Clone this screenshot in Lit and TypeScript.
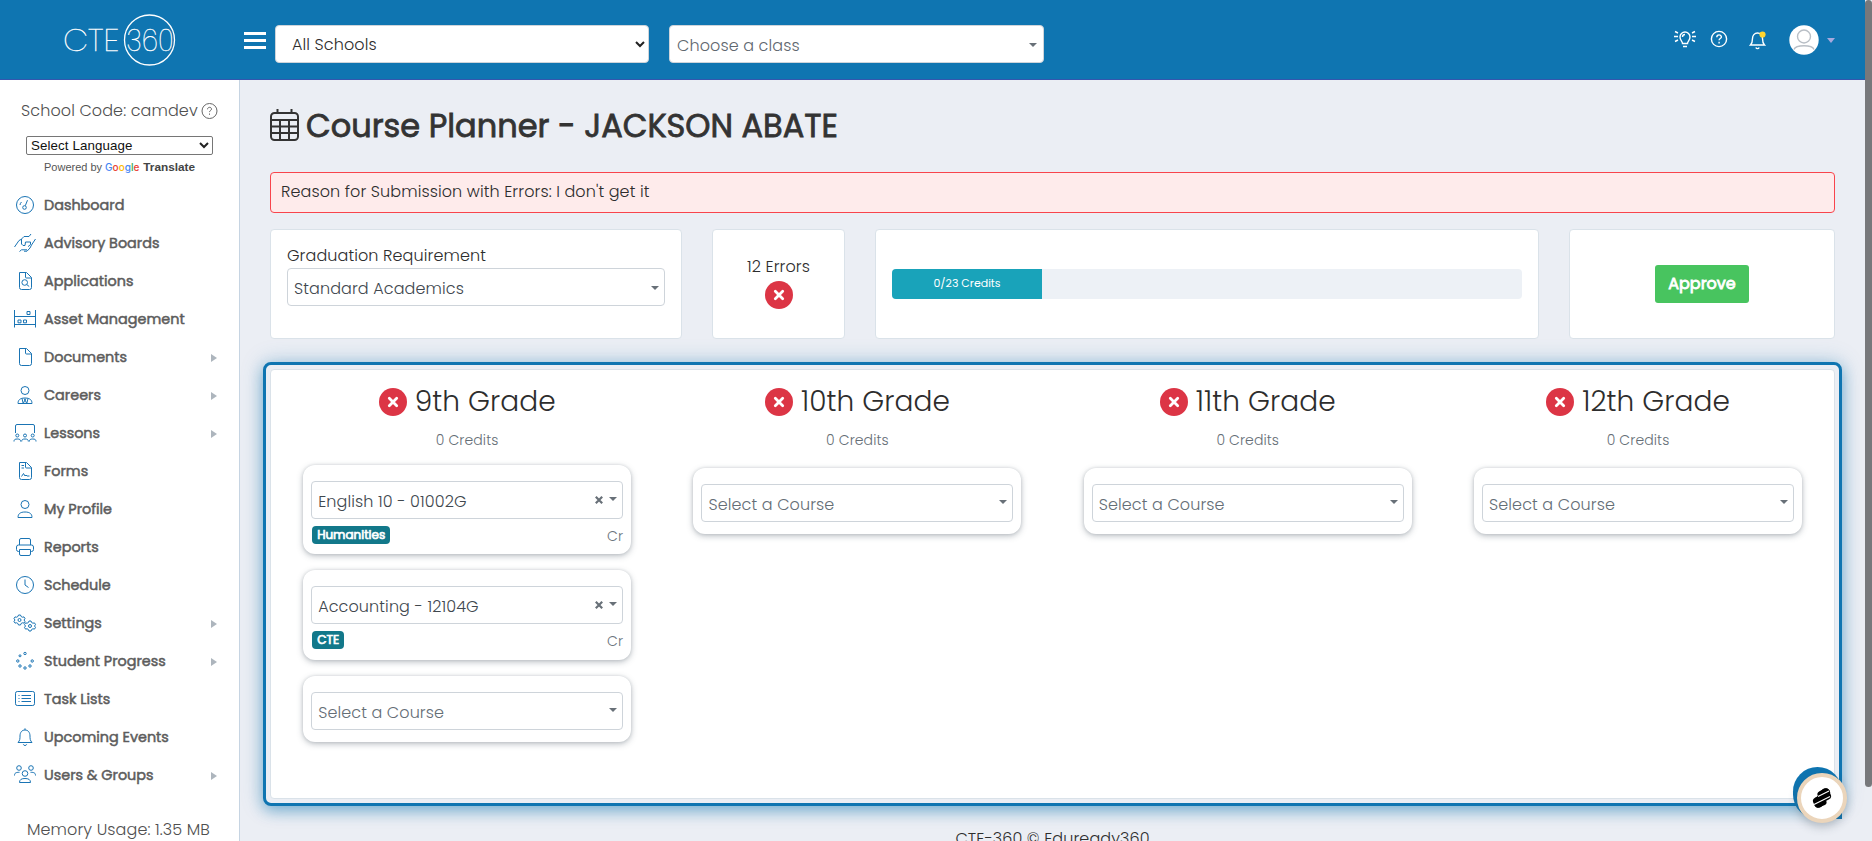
import { LitElement, html, css, svg, nothing } from "lit";
import { customElement } from "lit/decorators.js";

const page = svg`<path d="M6.500 3.500h7l5 5v10a2 2 0 0 1-2 2h-8a2 2 0 0 1-2-2zM12.500 3.500v4.500a1 1 0 0 0 1 1h5"/>`;
const gear = (x: number, y: number) => svg`<g transform="translate(${x} ${y})"><circle r="1.500"/><path d="M-1-5h2l.6 1.500 1.300.7 1.600-.3 1 1.700-1 1.400 1 1.400-1 1.700-1.600-.3-1.300.7L1 5h-2l-.6-1.500-1.300-.7-1.600.3-1-1.700 1-1.400-1-1.400 1-1.700 1.600.3 1.300-.7z"/></g>`;

const icons: Record<string, unknown> = {
  dash: svg`<circle cx="12" cy="12" r="8.500"/><circle cx="11.500" cy="14.500" r="1.800"/><path d="M12.300 12.700l2.200-5.500M7 12a5 5 0 0 1 1.500-3"/>`,
  hands: svg`<path d="M1.500 16l4.500-6.500 2-1M8.500 13V8L11 5.500h5l2-2.500M22.500 8l-4 6-1.500 3-3 3.200h-3M6.500 20.500l2-1.700h5.500M8.500 13l1.500 1.500h2l.5-3.500h5v2.500M17.500 13.500l-2.500 2.200"/>`,
  app: svg`${page}<circle cx="11.700" cy="13.500" r="2.800"/><path d="M13.700 15.500l2.500 2"/>`,
  asset: svg`<path d="M1.500 3v17.500M22.500 3v17.500M1.500 9.500h21M1.500 17.500h21M14 4.500h3v3h-3zM5 13h3v2.800H5zM10.500 13h3v2.800h-3z"/>`,
  doc: page,
  career: svg`<circle cx="12" cy="7.500" r="4"/><path d="M5 20.500c0-3.500 2-5.500 7-5.500s7 2 7 5.500zM9 15.500l1.200 5 1.800-3.500 1.800 3.500 1.200-5M11 15.500l1 1.500 1-1.500"/>`,
  lesson: svg`<path d="M2.500 12V5a1.500 1.500 0 0 1 1.500-1.500h16A1.500 1.500 0 0 1 21.500 5v7M1 20.500c0-2 1-2.500 3.300-2.500s3.300.5 3.300 2.500M8.700 20.500c0-2 1-2.500 3.300-2.500s3.300.5 3.300 2.500M16.400 20.500c0-2 1-2.500 3.300-2.500s3.300.5 3.300 2.500"/><circle cx="4.300" cy="14.500" r="1.500"/><circle cx="12" cy="14.500" r="1.500"/><circle cx="19.700" cy="14.500" r="1.500"/>`,
  form: svg`${page}<path d="M8.500 6.500h2.500M8.500 9h2.500M8.500 17.500l2-3 1.500 2.500 1-1 1 1h2.500"/>`,
  user: svg`<circle cx="12" cy="7.500" r="4"/><path d="M5 20.500c0-3.500 2-5.500 7-5.500s7 2 7 5.500z"/>`,
  print: svg`<path d="M6.500 10V5a1.500 1.500 0 0 1 1.500-1.500h8A1.500 1.500 0 0 1 17.500 5v5M6.500 16.500h-1a2 2 0 0 1-2-2V12a2 2 0 0 1 2-2h13a2 2 0 0 1 2 2v2.500a2 2 0 0 1-2 2h-1M6.500 14.500h11v4.500a1.500 1.500 0 0 1-1.500 1.500H8A1.500 1.500 0 0 1 6.500 19z"/>`,
  clock: svg`<circle cx="12" cy="12" r="8.500"/><path d="M12 6.500V12l3.500 2.500"/>`,
  gears: svg`${gear(6.5, 9)}${gear(17, 15)}`,
  spin: svg`<circle cx="12" cy="4.500" r="1.200"/><circle cx="12" cy="19" r="1.200"/><circle cx="4.800" cy="12" r="1.200"/><circle cx="19.200" cy="12" r="1.200"/><circle cx="7" cy="6.800" r="1"/><circle cx="7" cy="17" r="1.200"/><circle cx="17" cy="17" r="1.200"/>`,
  list: svg`<rect x="2.500" y="4.500" width="19" height="14" rx="1.800"/><path d="M8.500 8.500h9.500M8.500 11.500h9.500M8.500 14.500h9.500M5.500 8.500h1M5.500 11.500h1M5.500 14.500h1"/>`,
  bell: svg`<path d="M5 17.500c2-2 2-4 2-6.500 0-3.500 1.800-6 5-6s5 2.500 5 6c0 2.500 0 4.500 2 6.500zM12 3.300V5M10.300 19.300a1.800 1.800 0 0 0 3.400 0"/>`,
  group: svg`<circle cx="6" cy="5" r="2.300"/><circle cx="18" cy="5" r="2.300"/><circle cx="12" cy="10.500" r="2.800"/><path d="M6.500 19.500c0-3 2-4 5.500-4s5.500 1 5.500 4zM1.500 12.500c0-2.500 1.300-3.200 5-3.200M22.500 12.500c0-2.500-1.300-3.200-5-3.200"/>`,
};

const nav: [string, string, boolean][] = [
  ["dash", "Dashboard", false],
  ["hands", "Advisory Boards", false],
  ["app", "Applications", false],
  ["asset", "Asset Management", false],
  ["doc", "Documents", true],
  ["career", "Careers", true],
  ["lesson", "Lessons", true],
  ["form", "Forms", false],
  ["user", "My Profile", false],
  ["print", "Reports", false],
  ["clock", "Schedule", false],
  ["gears", "Settings", true],
  ["spin", "Student Progress", true],
  ["list", "Task Lists", false],
  ["bell", "Upcoming Events", false],
  ["group", "Users & Groups", true],
];

interface Course { name: string; tag: string }
interface Grade { name: string; courses: Course[] }
const grades: Grade[] = [
  { name: "9th Grade", courses: [
    { name: "English 10 - 01002G", tag: "Humanities" },
    { name: "Accounting - 12104G", tag: "CTE" },
  ] },
  { name: "10th Grade", courses: [] },
  { name: "11th Grade", courses: [] },
  { name: "12th Grade", courses: [] },
];

const credits = { barWidth: 150, label: "0/23 Credits" };

const errorDot = html`<svg class="dot" viewBox="0 0 28 28" width="28" height="28">
  <circle cx="14" cy="14" r="14" fill="#dc3545"/>
  <path d="M10.300 10.300l7.400 7.400M17.700 10.300l-7.400 7.400" stroke="#fff" stroke-width="2.800" stroke-linecap="round"/>
</svg>`;

const caret = html`<svg class="caret" width="8" height="4" viewBox="0 0 8 4"><path d="M0 0h8L4 4z" fill="#687078"/></svg>`;

const chevron = html`<svg width="10" height="7" viewBox="0 0 10 7"><path d="M1 1l4 4 4-4" fill="none" stroke="#222" stroke-width="2"/></svg>`;

@customElement("app-root")
class AppRoot extends LitElement {
  static styles = css`
    :host {
      display: block; position: relative; width: 1872px; height: 841px; overflow: hidden;
      background: #ebeef4; color: #2d2d2d;
      font-family: Poppins, Inter, "Open Sans", sans-serif;
      font-size: 16px; font-weight: 300; line-height: 24px; letter-spacing: .1px; white-space: nowrap;
    }
    * { box-sizing: border-box; }
    svg { display: block; flex: none; }
    .header { display: flex; height: 80px; width: 1865px; background: #0f75b1; border-bottom: 1px solid #3456ae; align-items: flex-start; }
    .brand { width: 244px; padding: 14px 0 0 62px; }
    .logo text { font-weight: 200; font-size: 30px; fill: #fff; stroke: #fff; stroke-width: .35px; letter-spacing: 0; }
    .burger { width: 22px; height: 17px; margin-top: 32px; display: flex; flex-direction: column; justify-content: space-between; }
    .burger i { height: 3px; background: #fff; }
    .select { display: flex; align-items: center; justify-content: space-between; border: 1px solid #ced4da; border-radius: 4px; background: #fff; height: 38px; }
    .schools { width: 374px; margin: 25px 0 0 9px; padding: 1px 3px 0 16px; }
    .class { width: 375px; margin: 25px 0 0 20px; padding: 3px 6px 0 7px; color: #5f676f; }
    .tools { display: flex; align-items: center; margin-left: auto; height: 80px; }
    .tools svg { fill: none; stroke: #fff; stroke-width: 1.400; }
    .tools .bulb { margin-top: -2px; }
    .tools .ask { margin: -2px 0 0 14px; }
    .tools .alarm { margin-left: 21px; }
    .tools .avatar { margin-left: 22px; }
    .tools .more { margin: 0 30px 0 8px; }
    .body { display: flex; height: 761px; width: 1865px; }
    .side { width: 240px; background: #fff; border-right: 1px solid #c6d4e2; color: #505050; padding-top: 19px; }
    .code { display: flex; gap: 3px; padding-left: 21px; height: 24px; align-items: center; }
    .code svg { fill: none; stroke: #666; }
    .lang { display: flex; align-items: center; justify-content: space-between; width: 187px; height: 19px; margin: 13px 0 0 26px; padding: 0 3px 0 4px; border: 1px solid #767676; border-radius: 2px; background: #fff; color: #111; font: 13.330px "Liberation Sans", Arial, sans-serif; }
    .powered { display: flex; align-items: center; height: 24px; padding-left: 44px; font: 11px "Liberation Sans", Arial, sans-serif; color: #555; letter-spacing: 0; }
    .google { margin: 0 4px 0 3px; font: 500 10px Inter, sans-serif; }
    .b { color: #4285f4; } .r { color: #ea4335; } .y { color: #fbbc05; } .g { color: #34a853; }
    .powered b { font-size: 11.800px; color: #444; }
    .nav { padding-top: 7px; }
    .item { display: flex; align-items: center; height: 38px; padding-left: 13px; font-size: 14.400px; font-weight: 400; letter-spacing: 0; -webkit-text-stroke: .5px currentColor; color: #5c5c5c; }
    .item > svg { fill: none; stroke: #1a74b4; stroke-width: 1; margin-right: 7px; }
    .item .arrow { margin: 2px 22px 0 auto; fill: #adb5bd; stroke: none; }
    .mem { padding: 24px 0 0 27px; }
    .main { width: 1625px; padding: 0 30px; }
    .title { display: flex; align-items: center; height: 92px; gap: 7px; font-size: 32px; font-weight: 400; letter-spacing: 0; -webkit-text-stroke: .8px currentColor; color: #333; }
    .title svg { margin-top: -2px; fill: none; stroke: #333; stroke-width: 2; }
    .alert { height: 41px; border: 1px solid #f8444c; border-radius: 4px; background: #feebeb; padding: 7px 10px; }
    .cards { display: grid; grid-template-columns: 412px 133px 664px 266px; gap: 30px; margin-top: 16px; height: 110px; }
    .card { border: 1px solid #dae2e9; border-radius: 4px; background: #fff; }
    .req { padding: 14px 16px; }
    .req .select { padding: 3px 5px 0 6px; color: #40474e; }
    .errors { display: flex; flex-direction: column; align-items: center; padding-top: 25px; }
    .errors .dot { margin-top: 2px; }
    .credit { padding: 39px 16px; }
    .bar { height: 30px; border-radius: 4px; overflow: hidden; background: #edf1f6; }
    .fill { height: 30px; display: flex; justify-content: center; padding-top: 2px; background: #19a3ba; color: #fff; font-size: 11px; font-weight: 400; letter-spacing: 0; }
    .center { display: flex; align-items: center; justify-content: center; }
    .approve { width: 94px; height: 38px; border-radius: 3px; background: #48c45f; color: #fff; font-weight: 400; letter-spacing: 0; -webkit-text-stroke: .8px currentColor; }
    .panel { width: 1579px; height: 444px; margin: 23px 0 0 -7px; border: 3px solid #0f75b1; border-radius: 8px; padding: 4px; box-shadow: 0 5px 14px rgba(15,117,177,.42), 0 0 22px rgba(15,117,177,.25); background: #ebeef4; }
    .grid { display: grid; grid-template-columns: repeat(4, 390.300px); height: 430px; padding-left: 1px; }
    .col { display: flex; flex-direction: column; align-items: center; }
    .gh { display: flex; align-items: center; gap: 8px; height: 40px; margin-top: 11.500px; font-size: 28px; font-weight: 300; }
    .cr0 { height: 24px; margin-top: 6.500px; font-size: 14px; color: #656e76; }
    .list { display: flex; flex-direction: column; gap: 16px; margin-top: 13px; width: 328px; }
    .none .list { margin-top: 16px; }
    .course { border-radius: 12px; background: #fff; padding: 16px 8px 0; height: 89.300px; box-shadow: 0 2px 6px rgba(60,75,90,.35), 0 0 3px rgba(60,75,90,.15); }
    .course.empty { height: 66px; }
    .course .select { padding: 0 5px 0 6px; color: #40474e; }
    .course.empty .select { color: #656e76; }
    .name { height: 22px; line-height: 25px; overflow: hidden; }
    .marks { display: flex; align-items: center; gap: 6px; }
    .caret { margin-top: -2px; }
    .meta { display: flex; justify-content: space-between; padding-left: 1px; font-size: 14px; color: #6c757d; height: 34px; align-items: center; }
    .tag { display: flex; align-items: center; height: 18px; margin-top: -2px; padding: 0 5px; border-radius: 4px; background: #12788a; color: #fff; font-size: 12px; font-weight: 400; letter-spacing: 0; -webkit-text-stroke: .7px currentColor; line-height: 18px; }
    .foot { margin-top: 21px; text-align: center; }
    .scroll { position: absolute; z-index: 4; right: 0; top: 0; width: 7px; height: 787px; border-radius: 4px; background: #77787b; }
    .help { position: absolute; z-index: 3; left: 1793px; top: 767px; width: 49px; height: 52px; border-radius: 25px 25px 0 25px; background: #0f75b1; }
    .fab { position: absolute; z-index: 3; left: 1797px; top: 773px; width: 50px; height: 50px; border-radius: 50%; border: 4px solid #ebd5bb; background: #fff; box-shadow: 0 4px 10px rgba(60,75,90,.3); display: flex; align-items: center; justify-content: center; }
  `;

  course(c?: Course) {
    return html`<div class="course ${c ? "" : "empty"}">
      <div class="select">
        <span class="name">${c ? c.name : "Select a Course"}</span>
        <span class="marks">
          ${c ? html`<svg width="8" height="8" viewBox="0 0 8 8"><path d="M.8.8l6.400 6.400M7.200.8L.8 7.200" stroke="#687078" stroke-width="2.200"/></svg>` : nothing}
          ${caret}
        </span>
      </div>
      ${c ? html`<div class="meta"><span class="tag">${c.tag}</span><span>Cr</span></div>` : nothing}
    </div>`;
  }

  render() {
    return html`
      <div class="header">
        <div class="brand">
          <svg class="logo" width="116" height="52" viewBox="62 14 116 52">
            <text x="63" y="50.500" textLength="56" lengthAdjust="spacingAndGlyphs">CTE</text>
            <text x="126.500" y="50.500" textLength="47" lengthAdjust="spacingAndGlyphs">360</text>
            <circle cx="149.500" cy="40" r="25" fill="none" stroke="#fff" stroke-width="1.300"/>
          </svg>
        </div>
        <div class="burger"><i></i><i></i><i></i></div>
        <div class="select schools"><span>All Schools</span>${chevron}</div>
        <div class="select class"><span>Choose a class</span>${caret}</div>
        <div class="tools">
          <svg class="bulb" width="22" height="18" viewBox="0 0 22 18"><path d="M8.500 13.500c0-2-2.500-3-2.500-6.500a5 5 0 0 1 10 0c0 3.500-2.500 4.500-2.500 6.500zM9 16.500h4M8.500 7A2.500 2.500 0 0 1 11 4.500M1 1.500l3 1.500M0 6.500h4M1 11.500l3-1.500M21 1.500l-3 1.500M22 6.500h-4M21 11.500l-3-1.500"/></svg>
          <svg class="ask" width="18" height="18" viewBox="0 0 18 18"><circle cx="9" cy="9" r="7.600"/><path d="M6.800 7.200c0-3 4.600-3 4.600-.2 0 1.600-2.300 1.500-2.300 3.300M9.100 11.800v1.600"/></svg>
          <svg class="alarm" width="18" height="20" viewBox="0 0 18 20"><path d="M1.500 15c2-2 2-3.500 2-6.500 0-3 2-5.500 5-5.500s5 2.500 5 5.500 0 4.500 2 6.500zM6.800 17.500c.7 1.500 2.700 1.500 3.400 0"/><circle cx="13.500" cy="4.500" r="3.100" fill="#ffd52e" stroke="none"/></svg>
          <svg class="avatar" width="30" height="30" viewBox="0 0 30 30"><circle cx="15" cy="15" r="14.700" fill="#fff" stroke="none"/><circle cx="15" cy="11.500" r="6.500" stroke="#b9bfc6"/><path d="M5 24.500c2-5 18-5 20 0" stroke="#b9bfc6"/></svg>
          <svg class="more" width="8" height="5" viewBox="0 0 8 5"><path d="M0 0h8L4 5z" fill="#a7a9de" stroke="none"/></svg>
        </div>
      </div>
      <div class="body">
        <div class="side">
          <div class="code"><span>School Code: camdev</span>
            <svg width="17" height="18" viewBox="0 0 17 18"><circle cx="8.500" cy="9" r="7.500"/><path d="M6.500 7.300c0-2.600 4-2.600 4-.2 0 1.400-2 1.400-2 3M8.500 11.500v1.300"/></svg>
          </div>
          <div class="lang"><span>Select Language</span>${chevron}</div>
          <div class="powered"><span>Powered by</span><span class="google"><span class="b">G</span><span class="r">o</span><span class="y">o</span><span class="b">g</span><span class="g">l</span><span class="r">e</span></span><b>Translate</b></div>
          <div class="nav">
            ${nav.map(([icon, label, sub]) => html`<div class="item">
              <svg width="24" height="24" viewBox="0 0 24 24">${icons[icon]}</svg><span>${label}</span>
              ${sub ? html`<svg class="arrow" width="6" height="8" viewBox="0 0 6 8"><path d="M0 0l6 4-6 4z"/></svg>` : nothing}
            </div>`)}
          </div>
          <div class="mem">Memory Usage: 1.35 MB</div>
        </div>
        <div class="main">
          <div class="title">
            <svg width="29" height="32" viewBox="0 0 29 32"><path d="M7.500 0v4M21.500 0v4M1 11h27M1 17.500h27M1 24h27M10 11v20M19 11v20"/><rect x="1" y="4" width="27" height="27" rx="3.500"/></svg>
            <span>Course Planner - JACKSON ABATE</span>
          </div>
          <div class="alert">Reason for Submission with Errors: I don't get it</div>
          <div class="cards">
            <div class="card req">Graduation Requirement
              <div class="select"><span>Standard Academics</span>${caret}</div>
            </div>
            <div class="card errors">12 Errors${errorDot}</div>
            <div class="card credit"><div class="bar"><div class="fill" style="width:${credits.barWidth}px">${credits.label}</div></div></div>
            <div class="card center"><div class="approve center">Approve</div></div>
          </div>
          <div class="panel">
            <div class="card grid">
              ${grades.map((g) => html`<div class="col ${g.courses.length ? "" : "none"}">
                <div class="gh">${errorDot}<span>${g.name}</span></div>
                <div class="cr0">0 Credits</div>
                <div class="list">${g.courses.map((c) => this.course(c))}${this.course()}</div>
              </div>`)}
            </div>
          </div>
          <div class="foot">CTE-360 © Eduready360</div>
        </div>
      </div>
      <div class="help"></div>
      <div class="fab"><svg width="20" height="22" viewBox="0 0 20 22"><g stroke="#000" stroke-linecap="round"><path d="M13.500 6L6.500 16" stroke-width="9.500"/><path d="M9 7.500l5-2.500M6 17l5-2" stroke-width="7"/><path d="M5 14l10-5" stroke-width="8"/></g><path d="M6 9.500l11-5.500M2 17.500l16-8" stroke="#fff" stroke-width="1.100"/></svg></div>
      <div class="scroll"></div>
    `;
  }
}
